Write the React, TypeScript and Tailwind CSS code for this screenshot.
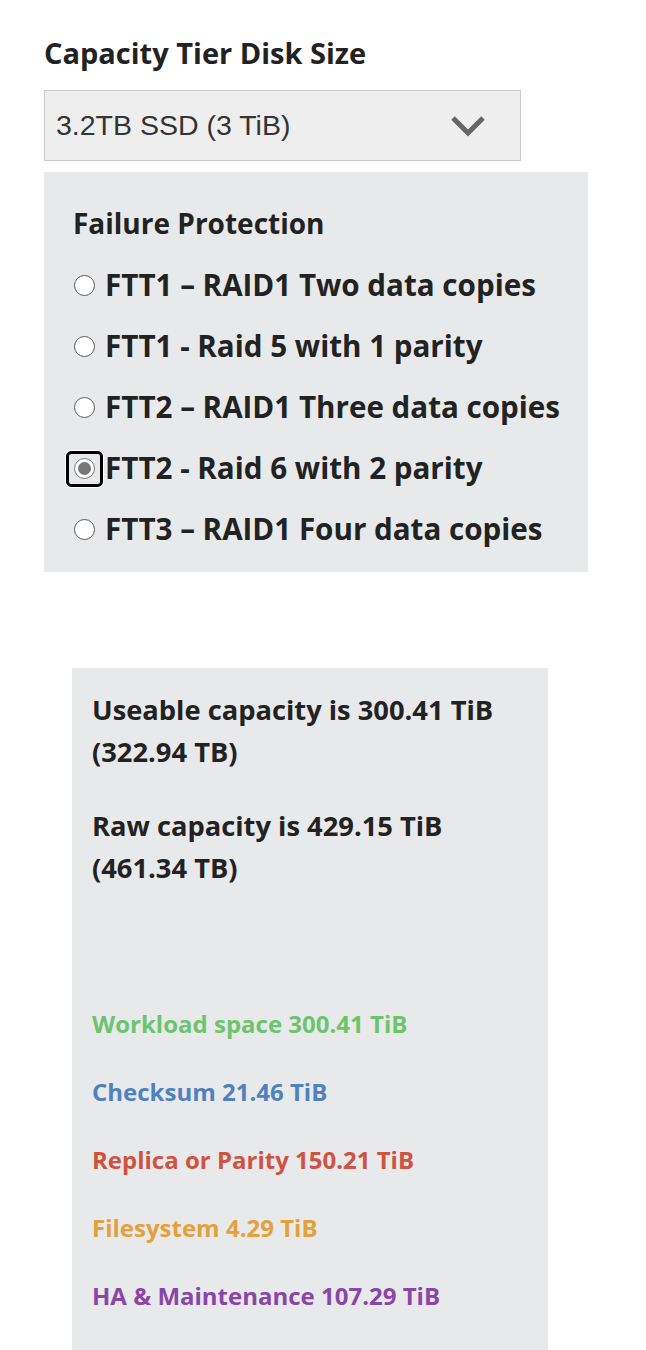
import React from 'react';

const options = [
  'FTT1 – RAID1 Two data copies',
  'FTT1 - Raid 5 with 1 parity',
  'FTT2 – RAID1 Three data copies',
  'FTT2 - Raid 6 with 2 parity',
  'FTT3 – RAID1 Four data copies',
];

const breakdown = [
  { label: 'Workload space 300.41 TiB', color: 'text-[#6cc46d]' },
  { label: 'Checksum 21.46 TiB', color: 'text-[#4f81bd]' },
  { label: 'Replica or Parity 150.21 TiB', color: 'text-[#d0533f]' },
  { label: 'Filesystem 4.29 TiB', color: 'text-[#e4a03a]' },
  { label: 'HA & Maintenance 107.29 TiB', color: 'text-[#8a45a8]' },
];

const Radio: React.FC<{ checked: boolean }> = ({ checked }) => {
  if (checked) {
    return (
      <span className="flex h-[36px] w-[37px] shrink-0 items-center justify-center rounded-[5px] border-[3px] border-black bg-[#e8e9ea] outline outline-1 outline-white">
        <span className="flex h-[21px] w-[21px] items-center justify-center rounded-full border border-[#777] bg-white">
          <span className="h-[13px] w-[13px] rounded-full bg-[#777]" />
        </span>
      </span>
    );
  }
  return (
    <span className="flex w-[37px] shrink-0 items-center justify-center">
      <span className="h-[21px] w-[21px] rounded-full border-[1.5px] border-[#5a5a5a] bg-white" />
    </span>
  );
};

const App: React.FC = () => {
  const selected = 3;

  return (
    <div className="min-h-[1350px] bg-white pl-[44px] pt-[34px] font-['Open_Sans',sans-serif] text-[#222]">
      <h2 className="text-[29px] font-bold leading-[38px]">Capacity Tier Disk Size</h2>

      <div className="mt-[18px] flex h-[71px] w-[477px] items-center justify-between border border-[#c9c9c9] bg-[#eeeeee] pl-[11px] pr-[34px]">
        <span className="font-['Liberation_Sans',Arial,sans-serif] text-[28.5px] text-[#333]">
          3.2TB SSD (3 TiB)
        </span>
        <svg width="36" height="22" viewBox="0 0 36 22" fill="none">
          <path d="M3 3 L18 18 L33 3" stroke="#666" strokeWidth="5" />
        </svg>
      </div>

      <div className="mt-[11px] h-[400px] w-[544px] bg-[#e8e9ea] pl-[22px] pt-[32px]">
        <h3 className="pl-[7px] text-[28px] font-bold leading-[38px]">Failure Protection</h3>
        <div className="mt-[13px] flex flex-col">
          {options.map((opt, i) => (
            <label key={opt} className="flex h-[61px] items-center">
              <Radio checked={i === selected} />
              <span className="whitespace-nowrap pl-[2px] text-[29.6px] font-bold">{opt}</span>
            </label>
          ))}
        </div>
      </div>

      <div className="ml-[28px] mt-[96px] min-h-[682px] w-[476px] bg-[#e8e9ea] px-[20px] pt-[21px]">
        <p className="text-[27.3px] font-bold leading-[42px]">
          Useable capacity is 300.41 TiB
          <br />
          (322.94 TB)
        </p>
        <p className="mt-[32px] text-[27.3px] font-bold leading-[42px]">
          Raw capacity is 429.15 TiB
          <br />
          (461.34 TB)
        </p>
        <div className="mt-[118px] flex flex-col">
          {breakdown.map((b) => (
            <p key={b.label} className={`h-[68px] text-[24px] font-bold leading-[34px] ${b.color}`}>
              {b.label}
            </p>
          ))}
        </div>
      </div>
    </div>
  );
};

export default App;
